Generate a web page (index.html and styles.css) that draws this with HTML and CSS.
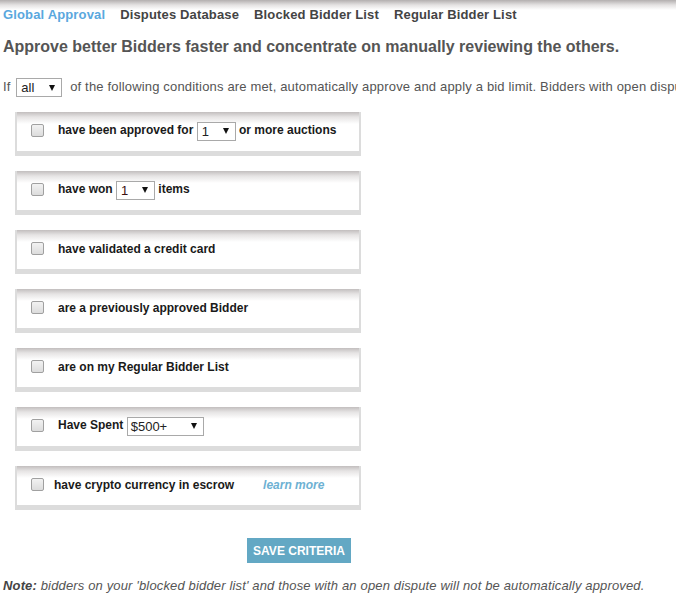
FILE: index.html
```html
<!DOCTYPE html>
<html>
<head>
<meta charset="utf-8">
<link rel="stylesheet" href="styles.css">
</head>
<body>
<div class="page">
  <nav class="tabs">
    <a class="tab active">Global Approval</a>
    <a class="tab">Disputes Database</a>
    <a class="tab">Blocked Bidder List</a>
    <a class="tab">Regular Bidder List</a>
  </nav>
  <h1 class="title">Approve better Bidders faster and concentrate on manually reviewing the others.</h1>
  <p class="intro">If <span class="sel sel-all"><span class="val">all</span><span class="arrow"></span></span> of the following conditions are met, automatically approve and apply a bid limit. Bidders with open disputes will not be automatically approved.</p>

  <div class="cards">
    <div class="card"><span class="cb"></span><span class="label">have been approved for <span class="sel sel-num"><span class="val">1</span><span class="arrow"></span></span> or more auctions</span></div>
    <div class="card"><span class="cb"></span><span class="label">have won <span class="sel sel-num"><span class="val red">1</span><span class="arrow"></span></span> items</span></div>
    <div class="card"><span class="cb"></span><span class="label">have validated a credit card</span></div>
    <div class="card"><span class="cb"></span><span class="label">are a previously approved Bidder</span></div>
    <div class="card"><span class="cb"></span><span class="label">are on my Regular Bidder List</span></div>
    <div class="card"><span class="cb"></span><span class="label">Have Spent <span class="sel sel-spent"><span class="val">$500+</span><span class="arrow"></span></span></span></div>
    <div class="card"><span class="cb"></span><span class="label tight">have crypto currency in escrow</span><a class="learn">learn more</a></div>
  </div>

  <button class="save">SAVE CRITERIA</button>

  <p class="note"><b>Note:</b> bidders on your 'blocked bidder list' and those with an open dispute will not be automatically approved.</p>
</div>
</body>
</html>
```
FILE: styles.css
```css
html, body {
  margin: 0;
  padding: 0;
}
body {
  background: #fff linear-gradient(#b3afaf 0, #e4e2e2 5px, #fff 10px) no-repeat;
  background-size: 100% 10px;
  font-family: "Liberation Sans", Arial, sans-serif;
  width: 676px;
  overflow: hidden;
}
.page {
  padding: 7px 0 0 3px;
  overflow: hidden;
}
.tabs {
  display: flex;
  gap: 15px;
  height: 16px;
  line-height: 16px;
  font-size: 13px;
  font-weight: bold;
  letter-spacing: 0.15px;
}
.tab {
  color: #444;
  text-decoration: none;
}
.tab.active {
  color: #5aa8de;
}
.title {
  margin: 14px 0 0;
  font-size: 16px;
  line-height: 20px;
  font-weight: bold;
  color: #555;
}
.intro {
  margin: 20px 0 0;
  font-size: 13px;
  line-height: 20px;
  color: #555;
  white-space: nowrap;
  letter-spacing: 0.17px;
}
.sel {
  display: inline-flex;
  align-items: center;
  justify-content: space-between;
  box-sizing: border-box;
  height: 19px;
  border: 1px solid #a9a9a9;
  background: #fff;
  vertical-align: middle;
  font-size: 13px;
  font-weight: normal;
  color: #222;
  padding: 0 6px 0 4px;
  margin: -2px 0;
  letter-spacing: 0;
}
.sel .val.red {
  color: #3a1010;
}
.sel-all {
  width: 46px;
  margin-left: 2px;
  margin-right: 4px;
}
.sel-num {
  width: 39px;
  padding-left: 4px;
}
.sel-spent {
  width: 77px;
  padding-left: 3px;
}
.arrow {
  width: 0;
  height: 0;
  border-left: 3.5px solid transparent;
  border-right: 3.5px solid transparent;
  border-top: 6px solid #111;
}
.cards {
  margin-top: 15px;
  margin-left: 12px;
  display: flex;
  flex-direction: column;
  gap: 15px;
}
.card {
  box-sizing: border-box;
  width: 346px;
  height: 44px;
  border-left: 2px solid #dcdcdc;
  border-right: 2px solid #dcdcdc;
  border-bottom: 5px solid #dcdcdc;
  background: linear-gradient(#c2bebe 0, #e6e4e4 5px, #fff 12px);
  padding: 0 0 0 14px;
  display: flex;
  align-items: center;
}
.cb {
  flex: none;
  box-sizing: border-box;
  width: 13px;
  height: 13px;
  border: 1px solid #a0a0a0;
  border-radius: 2px;
  background: linear-gradient(#f2f2f2, #dcdcdc);
  margin-right: 14px;
  margin-top: -2px;
}
.label {
  font-size: 12px;
  font-weight: bold;
  color: #1a1a1a;
  white-space: nowrap;
  margin-top: -1px;
}
.label.tight {
  margin-left: -4px;
}
.learn {
  margin-left: 29px;
  margin-top: -1px;
  font-size: 12px;
  font-weight: bold;
  font-style: italic;
  color: #6db1d3;
}
.save {
  display: block;
  margin: 28px 0 0 244px;
  width: 104px;
  height: 25px;
  border: none;
  padding: 0;
  background: #63a8c4;
  color: #fff;
  font-family: "Liberation Sans", Arial, sans-serif;
  font-size: 12px;
  font-weight: bold;
}
.note {
  margin: 14px 0 0;
  font-size: 13px;
  line-height: 18px;
  font-style: italic;
  color: #555;
  white-space: nowrap;
  letter-spacing: 0.15px;
}
.note b {
  color: #444;
}
```
